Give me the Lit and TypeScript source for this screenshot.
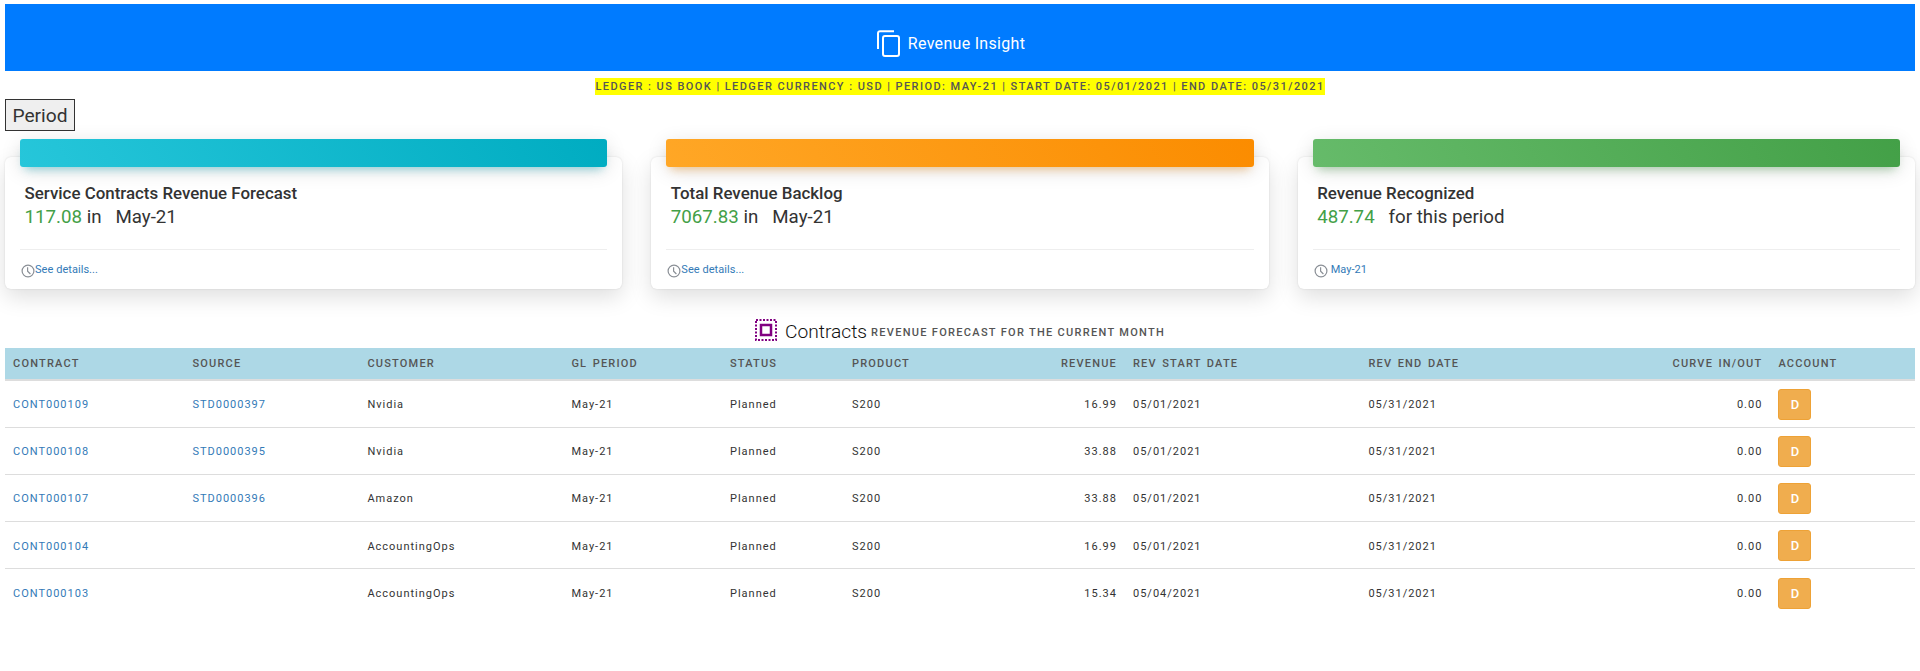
import { LitElement, html, css, svg } from "lit";
import { customElement } from "lit/decorators.js";

const COLS = [
  { label: "Contract", w: 179.4 },
  { label: "Source", w: 175 },
  { label: "Customer", w: 204 },
  { label: "GL Period", w: 158.6 },
  { label: "Status", w: 122 },
  { label: "Product", w: 176 },
  { label: "Revenue", w: 105, right: true },
  { label: "Rev Start Date", w: 235.4 },
  { label: "Rev End Date", w: 300 },
  { label: "Curve In/Out", w: 110, right: true },
  { label: "Account", w: 145 },
];

const ROWS = [
  ["CONT000109", "STD0000397", "Nvidia", "16.99", "05/01/2021"],
  ["CONT000108", "STD0000395", "Nvidia", "33.88", "05/01/2021"],
  ["CONT000107", "STD0000396", "Amazon", "33.88", "05/01/2021"],
  ["CONT000104", "", "AccountingOps", "16.99", "05/01/2021"],
  ["CONT000103", "", "AccountingOps", "15.34", "05/04/2021"],
];

const clock = svg`<svg class="clock" viewBox="0 0 14 14" width="14" height="14" fill="none" stroke="#8a8f96" stroke-width="1.2"><circle cx="7" cy="7" r="5.9"/><path d="M6.6 3.2V7.2L9.4 10"/></svg>`;

@customElement("app-root")
export class AppRoot extends LitElement {
  static styles = css`
    :host {
      display: block;
      font-family: Roboto, "Liberation Sans", sans-serif;
      color: #333;
      padding: 4px 5px 0 5px;
    }
    .banner {
      height: 67px;
      box-sizing: border-box;
      padding: 11px 18px 0 0;
      background: #007bff;
      color: #fff;
      display: flex;
      align-items: center;
      justify-content: center;
      gap: 7px;
      font-size: 16px;
      letter-spacing: 0.3px;
    }
    .strip-wrap { margin-top: 7px; display: flex; justify-content: center; }
    .strip {
      background: #ffff00;
      color: #555;
      font-size: 11px;
      font-weight: 500;
      line-height: 17px;
      letter-spacing: 1.43px;
      white-space: pre;
    }
    .period {
      display: block;
      margin-top: 4px;
      width: 70px;
      height: 32px;
      padding: 0;
      border: 1px solid #333;
      background: #efefef;
      color: #333;
      font: 400 19.2px Roboto, sans-serif;
    }
    .cards {
      display: grid;
      grid-template-columns: repeat(3, 1fr);
      gap: 29px;
      margin-top: 26px;
    }
    .card {
      height: 132px;
      background: #fff;
      border-radius: 6px;
      box-shadow: 0 8px 22px rgba(0, 0, 0, 0.13), 0 0 2px rgba(0, 0, 0, 0.12);
      padding: 0 15px;
      display: flex;
      flex-direction: column;
    }
    .bar {
      height: 28px;
      margin-top: -18px;
      border-radius: 3px;
      flex: none;
    }
    .bar.cyan {
      background: linear-gradient(60deg, #26c6da, #00acc1);
      box-shadow: 0 4px 20px rgba(0, 0, 0, 0.12), 0 7px 10px -5px rgba(0, 172, 193, 0.4);
    }
    .bar.orange {
      background: linear-gradient(60deg, #ffa726, #fb8c00);
      box-shadow: 0 4px 20px rgba(0, 0, 0, 0.12), 0 7px 10px -5px rgba(251, 140, 0, 0.4);
    }
    .bar.green {
      background: linear-gradient(60deg, #66bb6a, #43a047);
      box-shadow: 0 4px 20px rgba(0, 0, 0, 0.12), 0 7px 10px -5px rgba(67, 160, 71, 0.4);
    }
    .card-body { box-sizing: border-box; padding: 15px 5px 0 4.5px; height: 82px; flex: none; }
    .card-title { font-size: 16.9px; font-weight: 500; line-height: 22px; color: #333; }
    .card-value { font-size: 18.72px; line-height: 24px; margin-top: 1px; color: #333; white-space: pre; }
    .num { color: #43a047; }
    .card-foot {
      border-top: 1px solid #eee;
      display: flex;
      align-items: center;
      flex: 1;
      font-size: 11px;
      letter-spacing: 0.05px;
      white-space: pre;
    }
    .clock { margin: 3px 0 0 1px; flex: none; }
    .foot-gap { margin-left: 3px; }
    .section {
      margin-top: 30px;
      height: 22px;
      display: flex;
      align-items: center;
      justify-content: center;
      font-size: 19.2px;
      font-weight: 300;
      color: #111;
    }
    .section svg { margin-right: 8px; flex: none; }
    .section span { margin-top: 2px; }
    .section small {
      font-size: 11px;
      font-weight: 500;
      letter-spacing: 1.3px;
      text-transform: uppercase;
      color: #555;
      margin: 5px 0 0 4px;
    }
    table {
      margin-top: 7px;
      width: 1910px;
      table-layout: fixed;
      border-collapse: collapse;
      font-size: 11px;
      letter-spacing: 1px;
    }
    th {
      height: 31px;
      padding: 0 8px;
      background: #add8e6;
      border-bottom: 2px solid #ddd;
      color: #555;
      font-weight: 500;
      text-align: left;
      text-transform: uppercase;
      letter-spacing: 1.2px;
      word-spacing: 1.5px;
      white-space: nowrap;
    }
    td {
      height: 47.2px;
      padding: 2px 8px 0 8px;
      border-bottom: 1px solid #ddd;
      color: #333;
      box-sizing: border-box;
    }
    tr:last-child td { border-bottom: 0; }
    th.r, td.r { text-align: right; }
    a { color: #337ab7; text-decoration: none; }
    .d {
      display: block;
      width: 33px;
      height: 31px;
      margin-top: -1px;
      padding: 0;
      background: #f0ad4e;
      border: 1px solid #eea236;
      border-radius: 3px;
      color: #fff;
      font: 500 13px Roboto, sans-serif;
      letter-spacing: 0;
    }
  `;

  card(color: string, title: string, value: unknown, foot: unknown) {
    return html`<div class="card">
      <div class="bar ${color}"></div>
      <div class="card-body">
        <div class="card-title">${title}</div>
        <div class="card-value">${value}</div>
      </div>
      <div class="card-foot">${clock}${foot}</div>
    </div>`;
  }

  render() {
    return html`
      <div class="banner">
        <svg width="24" height="27" viewBox="0 0 24 27" fill="none" stroke="#fff" stroke-width="2">
          <path d="M17 1.2H3A2 2 0 0 0 1 3.2V19" />
          <rect x="6" y="6" width="16" height="20" rx="2" />
        </svg>
        <span>Revenue Insight</span>
      </div>
      <div class="strip-wrap">
        <span class="strip">LEDGER : US BOOK | LEDGER CURRENCY : USD | PERIOD: MAY-21 | START DATE: 05/01/2021 | END DATE: 05/31/2021</span>
      </div>
      <button class="period">Period</button>
      <div class="cards">
        ${this.card("cyan", "Service Contracts Revenue Forecast",
          html`<span class="num">117.08</span> in   May-21`, html`<a href="#">See details...</a>`)}
        ${this.card("orange", "Total Revenue Backlog",
          html`<span class="num">7067.83</span> in   May-21`, html`<a href="#">See details...</a>`)}
        ${this.card("green", "Revenue Recognized",
          html`<span class="num">487.74</span>   for this period`, html`<a class="foot-gap" href="#">May-21</a>`)}
      </div>
      <div class="section">
        <svg width="22" height="22" viewBox="0 0 22 22" fill="none" stroke="#800080">
          <rect x="1" y="1" width="20" height="20" stroke-width="2" stroke-dasharray="2 1.5" />
          <rect x="6" y="6" width="10" height="10" stroke-width="2.5" />
        </svg>
        <span>Contracts</span>
        <small>Revenue forecast for the current month</small>
      </div>
      <table>
        <colgroup>
          ${COLS.map((c) => html`<col style="width:${c.w}px" />`)}
        </colgroup>
        <thead>
          <tr>
            ${COLS.map((c) => html`<th class=${c.right ? "r" : ""}>${c.label}</th>`)}
          </tr>
        </thead>
        <tbody>
          ${ROWS.map(
            (r) => html`<tr>
              <td><a href="#">${r[0]}</a></td>
              <td><a href="#">${r[1]}</a></td>
              <td>${r[2]}</td>
              <td>May-21</td>
              <td>Planned</td>
              <td>S200</td>
              <td class="r">${r[3]}</td>
              <td>${r[4]}</td>
              <td>05/31/2021</td>
              <td class="r">0.00</td>
              <td><button class="d">D</button></td>
            </tr>`
          )}
        </tbody>
      </table>
    `;
  }
}
